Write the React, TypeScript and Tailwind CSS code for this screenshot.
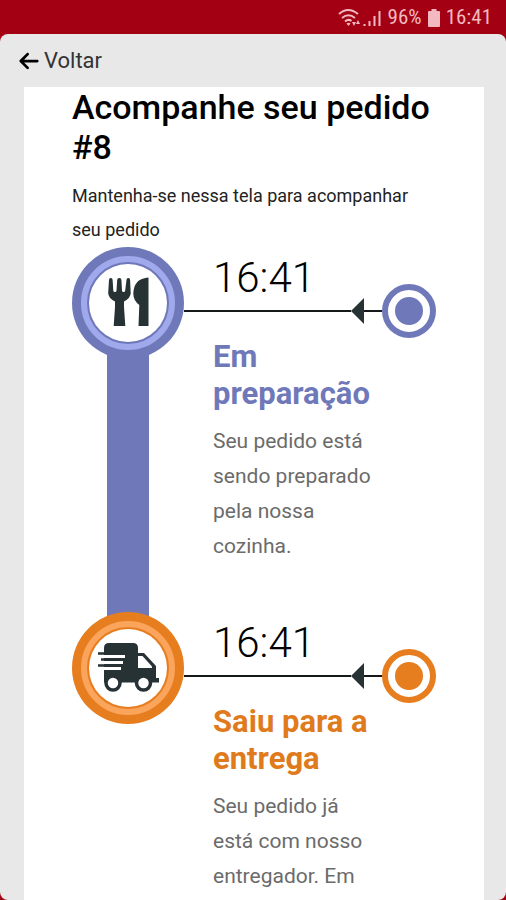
import type { ReactNode } from "react";
import { FaArrowLeft } from "react-icons/fa6";

type Step = {
  time: string;
  title: string;
  description: string;
  text: string;
  fill: string;
  line: string;
  ring: string;
  border: string;
  icon: ReactNode;
};

function CutleryIcon() {
  return (
    <g fill="#263234">
      {/* Fork */}
      <path
        d="M37 33q0-2 1.800-2t1.800 2l.7 10.500q.1 1.500 1.600 1.500t1.600-1.500L45.200 33q0-2 2.100-2t2.100 2l.6 10.500q.1 1.500 1.600 1.500t1.600-1.500L54.500 33q0-2 1.800-2t1.800 2l.6 13q0 5-6.700 8.500V60l1.300 19H41.700L43 60v-5.500Q36.200 51 36.200 46z"
      />
      {/* Knife */}
      <path d="M76.500 30.500V79H66.500l.8-21q-6-4.500-6-11.500 .5-13.500 12-15.500z" />
    </g>
  );
}

function TruckIcon() {
  return (
    <g>
      <path
        fill="#263234"
        d="M32 36q0-5 5-5h24q5 0 5 5v5h6l12 13v12h3v4.500H32z"
      />
      <path fill="#fff" d="M66 44h4.500L80 54.500V56H66z" />
      <path fill="#fff" d="M25 43h28v3H25zM25 49h26v3H25zM25 55h24v3H25zM25 40h7v3h-7z" />
      <path stroke="#263234" strokeWidth="2.500" d="M26 41.500h26M29 47.500h22M26 53.500h22" />
      <g fill="#fff" stroke="#263234" strokeWidth="3.500">
        <circle cx="41" cy="71" r="7" />
        <circle cx="71.500" cy="71" r="7" />
      </g>
    </g>
  );
}

const steps: Step[] = [
  {
    time: "16:41",
    title: "Em preparação",
    description: "Seu pedido está sendo preparado pela nossa cozinha.",
    text: "text-[#6f79b9]",
    fill: "bg-[#6f79b9]",
    line: "#6f79b9",
    ring: "#9fa9ec",
    border: "border-[#6f79b9]",
    icon: <CutleryIcon />,
  },
  {
    time: "16:41",
    title: "Saiu para a entrega",
    description: "Seu pedido já está com nosso entregador. Em",
    text: "text-[#df7b1c]",
    fill: "bg-[#e67d1e]",
    line: "#e67d1e",
    ring: "#fba45c",
    border: "border-[#e67d1e]",
    icon: <TruckIcon />,
  },
];

function StatusBar() {
  return (
    <div className="flex h-[34px] items-center justify-end px-3.5 pt-0.5 font-['Roboto_Condensed',Roboto,sans-serif] text-[21px] text-[#f3b9c0]">
      <svg className="mr-1.5" width="44" height="20" viewBox="0 0 44 20" fill="none" stroke="currentColor" strokeWidth="2">
        {/* Wi-Fi */}
        <path d="M1 6q9-8 19 0M4 10q6.500-5.500 13 0M7 13.500q3.500-3 6.500-.5" />
        <path fill="currentColor" stroke="none" d="M8.500 15.500q2-1.500 4 0l-2 2.500zM14 14h4l-2 4zM18 16l2-4 2 4z" />
        {/* Signal */}
        <path d="M26.500 18v-2M31.500 18v-5M36.500 18V8M41.500 18V3" />
      </svg>
      <span>96%</span>
      <svg className="mx-1.5" width="12" height="18" viewBox="0 0 12 18" fill="currentColor">
        <path d="M3.500 0h5v2H11q1 0 1 1v14q0 1-1 1H1q-1 0-1-1V3q0-1 1-1h2.500z" />
      </svg>
      <span>16:41</span>
    </div>
  );
}

function TimelineStep({ step, last }: { step: Step; last: boolean }) {
  return (
    <li className="flex">
      {/* Badge and bar down to the next step */}
      <div className="flex w-28 shrink-0 flex-col items-center">
        <svg className="shrink-0" width="112" height="112" viewBox="0 0 112 112" fill="none">
          <circle cx="56" cy="56" r="56" fill={step.line} />
          <circle cx="56" cy="56" r="44" stroke={step.ring} strokeWidth="6" />
          <circle cx="56" cy="56" r="39" fill="#fff" />
          {step.icon}
        </svg>
        {!last && <div className={`-my-2 w-[42px] flex-1 ${step.fill}`} />}
      </div>

      <div className={`min-w-0 flex-1 ${last ? "" : "pb-12"}`}>
        <time className="block pt-px pl-[29px] text-[42px] leading-[60px] font-light text-black">
          {step.time}
        </time>
        <div className="-mt-6 flex items-center">
          <span className="h-[2px] flex-1 bg-[#15191a]" />
          <svg width="13" height="26" viewBox="0 0 13 26">
            <path fill="#263234" d="M13 0v26L0 13z" />
          </svg>
          <span className="h-[2px] w-[18px] bg-[#15191a]" />
          <span
            className={`flex size-[54px] items-center justify-center rounded-full border-6 ${step.border}`}
          >
            <span className={`size-7 rounded-full ${step.fill}`} />
          </span>
        </div>
        <div className="pr-14 pl-[29px]">
          <h2 className={`text-[31px] leading-[37px] font-bold ${step.text}`}>{step.title}</h2>
          <p className="mt-3 text-[21px] leading-[35px] text-[#6b6b6b]">{step.description}</p>
        </div>
      </div>
    </li>
  );
}

export default function App() {
  return (
    <div className="flex h-screen flex-col overflow-hidden bg-[#a30014] font-[Roboto,sans-serif]">
      <StatusBar />
      <div className="flex min-h-0 flex-1 flex-col overflow-hidden rounded-lg bg-[#e8e8e8]">
        <header className="flex h-[53px] shrink-0 items-center px-[18px]">
          <a href="#" className="flex items-center gap-1 text-[22px] text-[#333]">
            <FaArrowLeft className="size-[22px] text-black" />
            Voltar
          </a>
        </header>
        <main className="mr-[22px] ml-6 flex-1 bg-white px-12">
          <h1 className="text-[34px] leading-10 font-medium text-black">Acompanhe seu pedido #8</h1>
          <p className="mt-3 text-[18px] leading-[34px] text-[#222]">
            Mantenha-se nessa tela para acompanhar seu pedido
          </p>
          <ol>
            {steps.map((step, i) => (
              <TimelineStep key={step.title} step={step} last={i === steps.length - 1} />
            ))}
          </ol>
        </main>
      </div>
    </div>
  );
}
